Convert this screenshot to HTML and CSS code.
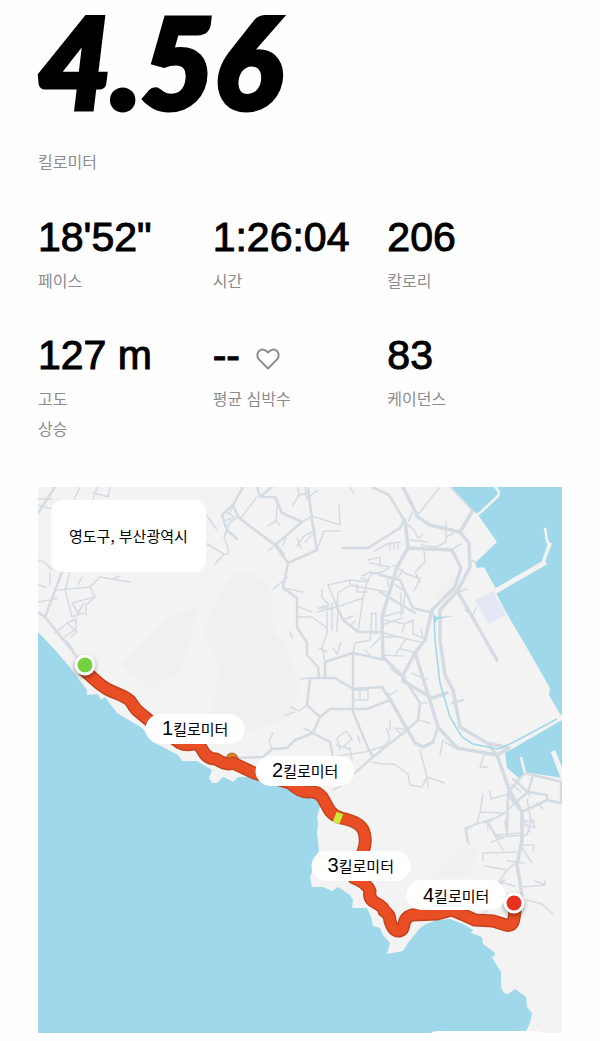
FILE: index.html
```
<!DOCTYPE html>
<html lang="ko">
<head>
    <meta charset="UTF-8">
    <meta name="viewport" content="width=device-width, initial-scale=1.0">
    <title>러닝 기록</title>
    <link rel="stylesheet" href="styles.css">
</head>
<body>

    <main class="run">
        <h1 class="distance">4.56</h1>
        <p class="label">킬로미터</p>

        <dl class="stats">
            <div class="stat">
                <dd class="value">18'52"</dd>
                <dt class="label">페이스</dt>
            </div>
            <div class="stat">
                <dd class="value">1:26:04</dd>
                <dt class="label">시간</dt>
            </div>
            <div class="stat">
                <dd class="value">206</dd>
                <dt class="label">칼로리</dt>
            </div>
            <div class="stat">
                <dd class="value">127 m</dd>
                <dt class="label">고도<br>상승</dt>
            </div>
            <div class="stat">
                <dd class="value">--
                    <svg class="heart" viewBox="0 0 24 22" aria-hidden="true">
                        <path d="M12 20.5 3 11.4C.6 8.8.8 5 3.1 3c2.500-2.200 6.200-1.800 8.900 1.500C14.700 1.200 18.400.8 20.900 3c2.300 2 2.500 5.800.1 8.400Z"/>
                    </svg>
                </dd>
                <dt class="label">평균 심박수</dt>
            </div>
            <div class="stat">
                <dd class="value">83</dd>
                <dt class="label">케이던스</dt>
            </div>
        </dl>

        <section class="map">
            <svg class="map-art" viewBox="38 487 524 546" aria-hidden="true">
                <!-- hills -->
                <g class="hill">
                    <path d="M222 588l15-15 15 0 12 10 8 10 2 40 10 10 16 45-8 30-40 12-30 2-12-12 10-50-16-40Z"/>
                    <path d="M198 607l-30 10-25 26-22 22 30 25 30-20 8-25Z"/>
                    <path d="M235 611l12 8-5 25 20 20-3 28-18 8-10-40Z"/>
                    <path d="M460 847l20 0-12 28-42 6Z"/>
                    <path d="M455 573l3 14-14 14-12-5Z"/>
                </g>

                <!-- small streets -->
                <path class="road thin" d="M97 487l-4 13M80 487l-6 13M93 493l16 4M108 497l2-10M38 499l14 0M38 505l14 4M38 560l6 2 8 8M50 573l0 12M38 602l12-2 7-2M58 590l32-3 10-10 30 5M65 590l7 27 11-4M90 587l5 10-23 6M70 572l-5 18M72 603l6 10 6-10M95 597l-9 8 0 10M82 577l-4 8M55 633l12-10 10 9-6 5M67 623l9-4 0 10-14 10M38 585l8 2M100 577l12 2 8-3M66 640l7 10M107 515l0-4"/>
                <path class="road thin" d="M217 530l-10-14M207 544l17 10-9 10M224 554l4 0 0-7-4-10 6-15 8-5M227 530l-2 6M225 521l9-4-9-6M229 514l5-9M257 497l-17 22M278 499l-2 22-8 5M276 521l4 4M298 487l1 8 10-2M299 495l-6 10M305 487l2 12 8-7 3-1M302 522l10-6 28 9-1-20M317 550l7-19 16 0M302 522l-34 29M283 545l3-7M297 546l7-10 8-4M297 538l4 10M312 520l3 12-10 10M350 487l4 7M277 545l7 9M288 577l-15 12M283 588l20 4M297 606l15 6M290 632l2 6M297 617l15 0 15 11"/>
                <path class="road thin" d="M328 585l22-5 17 2M337 607l1-14 12-8 37 7M317 612l20-5 26-9M328 585l9 22M367 582l-4 16-5 34M371 614l5-1 0 20-6 0M372 613l-2 27-15 3-2 10M327 607l0 26-5 14 3 15M332 603l0 27M338 608l-1 24M350 580l0 6M322 597l7 8-8 2M318 608l12 0M322 590l0 8M357 584l0 8 10 0M361 578l8 3M368 560l12-3 0 9M370 563l20 4-8 5-11 2-4 8M362 576l8-4 18 4 0 10M375 551l12-7 13-2M390 543l0 7M394 543l0 6M398 543l0 5M382 617l18-5M382 625l20-7M383 637l18 0M383 655l20 1M380 638l-10 10M343 620l10-4M350 626l5-5M333 648l4 6 4-12M327 652l-8-4M365 650l5 5"/>
                <path class="road thin" d="M407 524l7 6 4 8 6-4M410 540l17 2M440 487l-16 20-8 10M412 512l-3 9M446 522l0 20-10 5-15-2M446 537l8-4M451 550l10-6M424 550l1 12-10 10 5 10M393 565l12 8 15 6-6 12M403 570l-5 7M395 585l10 6-2 22M401 593l0 22M385 620l20 4 8-4M405 624l-3 8M413 620l0 14 10 4-2-10M383 633l40 10M405 640l-9 14M415 653l-14-4M388 662l8 10 10 5M397 690l-7 5-7-5M390 668l10 8M412 673l12 6 4 0M470 560l6 2M458 592l9-3M465 610l8 5 3-7"/>
                <path class="road thin" d="M355 690l13 0 0 10-13 0M360 690l0 8M310 678l-9 1M307 705l-8 6-8-4M272 749l-3-8 4-8M313 733l-9-5M285 715l10-3M333 757l12-2 20-3 20-6M340 750l-3-12 8-6M343 747l9-8-6-8M336 745l14 4M352 760l-2-12M360 742l-2-6M380 751l10-12-3-10M372 762l10 2 12 0 14 10 2 11 12 2 5-10-7-27M340 775l10 4M390 720l0 10M395 728l5 5M427 777l17 6M427 777l1 10M406 730l-8-2M418 720l12 3M422 703l5 0M443 740l-3 15M455 748l-10-6M480 767l4-12M480 767l7 0M333 790l8-4"/>
                <path class="road thin" d="M480 812l25 1 10-10M480 812l-3 11-11 7 3 14M480 812l3-18M490 791l1 8 17-5M488 822l9 15 30-2 4-14-4-22M488 822l0 8M488 822l17-9M465 828l18-6 15-5M465 828l2 14M483 822l5 1 15 27M497 835l23-2M505 820l2 15M491 842l12-4M483 861l0-8 34-1M485 866l22 4 10-8M507 870l-8 12M522 887l23-2-10-4M545 885l0-5M527 900l15 4 11 10M520 845l14 0-1 6M520 845l12 18M507 861l17 2M525 825l10 3-3-8M500 882l15 4M524 820l6 12M505 880l-14 8M490 907l-8 8M516 780l14 16M511 784l10 8M526 821l8 0M537 803l6 6"/>

                <!-- main streets -->
                <path class="road mid" d="M55 487l-17 26M62 572l-17 45-7-5M45 617l32 40M260 497l12-10M233 505l-11 10 5 15 10 9M260 497l15 0 7 16 20 9-27 23M257 487l3 10M308 487l4 33 5 30-29 13-13-18-37-28-5-12 10-18"/>
                <path class="road mid" d="M288 563l-5 25 14 10 0 29 10 16 0 12 11 12 1 11M343 548l25 0 32-20 4-8-15-25-17-8M337 607l6 13 15 12 24 0M380 575l20 5 13 28 20 5M380 592l30 18 5 3M325 677l0-15 28-9 32 7M310 678l25 0 18 11 29-2 8 13 17 30M310 678l-3 27 13 12-7 16-18 7-8 8-15 1-9 8-26 1M320 717l10-8 37 0 23-9M353 653l0 59 15 36 5 9M313 733l17 9 3 15M347 780l26-23 34-27 11-10 2-17-17-26M415 743l8 4 10-5 5-15"/>
                <path class="road main" d="M403 487l15 30 12 8 30 7 9 11 1 24-12 23-18 20 0 30 5 35 8 15 7 37 27 16 10 12 13 37 12 20 0 28-5 25 5 30M452 487l21 23-13 22M405 520l3 28 44 2 9 18-6 19-23 23-7 30-10 13-12 22 0 6 29 17 15-5M408 548l-11 19-15 50 1 40 20 20M415 653l7 22 16 52 19 21 40 7M433 742l-10 5-8-4-25-44M458 592l39 68M487 743l22 5-12 7"/>
                <path class="road mid" d="M508 792l-1 41M515 803l13-11 5-17M508 792l17-19 37 9M528 792l19 3 0 5-25 12M547 800l14 3 0-20M513 779l15 13M452 703l11-3M508 795l14 17 0 25"/>

                <!-- sea -->
                <path class="water" d="M38 632L55 650 68 665 77 677 87 690 87 695 98 694 101 700 105 697 117 713 142 728 153 742 178 755 182 761 197 761 212 770 209 778 212 783 217 783 223 777 230 780 233 782 238 777 253 777 277 783 298 793 315 798 320 807 317 817 318 823 317 833 319 850 312 865 312 872 310 877 312 887 323 887 332 891 338 887 350 895 353 900 352 908 367 908 371 917 373 926 380 928 383 935 390 943 387 954 403 951 408 943 420 928 426 924 437 920 450 919 463 924 473 930 471 933 482 937 483 944 495 953 494 957 491 956 501 972 501 987 504 993 508 994 515 989 526 997 527 1007 532 1013 530 1023 525 1033 38 1033Z"/>
                <path class="water" d="M452 487l10 11 11 12 5 5 19 27-22 21 2 5 7-1 11 20 2 8 9 17 21 36 23 40-1 7 11 19 2 1 0-228Z"/>
                <path class="water" d="M505 753l57-33 0 58-37-6-6 6-12-10Z"/>
                <path class="canal" d="M434 615l0 0 1 25 5 43 10 34 12 20 11 7 25 5 14-6 45-24"/>
                <path class="water" d="M434 615l3 2 17-1-16 3-3 4Z"/>
                <path class="dock" d="M475 600l18-9 13 24-18 9Z"/>

                <!-- piers -->
                <path class="pier" d="M474 517l7-5 17-16 1-4-5-7M545 528l2 13 2 3-6 18M551 543l-8 20"/>
                <path class="pier wide" d="M494 592l52-30M553 751l10 26"/>
                <path class="pier" d="M521 757l4 16"/>

                <!-- run -->
                <circle class="pause" cx="232" cy="759" r="6"/>
                <path class="track-edge" d="M85 671C92 677 98 684 107 689S127 696 131 702 135 709 139 712L156 726 180 743Q186 746 193 744 199 743 203 751T216 759Q227 766 233 763L254 773 290 783Q301 793 309 792T322 797L330 811Q334 816 341 818 361 822 364 832T363 852L354 878Q367 883 370 891 368 899 376 903T384 911Q390 914 390 921 393 931 398 931T404 924 412 915L437 914 452 910Q464 915 475 920L493 921 506 925Q513 927 514 918L516 905"/>
                <path class="track" d="M85 671C92 677 98 684 107 689S127 696 131 702 135 709 139 712L156 726 180 743Q186 746 193 744 199 743 203 751T216 759Q227 766 233 763L254 773 290 783Q301 793 309 792T322 797L330 811Q334 816 341 818 361 822 364 832T363 852L354 878Q367 883 370 891 368 899 376 903T384 911Q390 914 390 921 393 931 398 931T404 924 412 915L437 914 452 910Q464 915 475 920L493 921 506 925Q513 927 514 918L516 905"/>
                <path class="fast" d="M340 813l-4 10"/>
                <g class="marker">
                    <circle class="ring" cx="85" cy="665" r="10.500"/>
                    <circle class="start" cx="85" cy="665" r="7.500"/>
                    <circle class="ring" cx="514" cy="903" r="10.500"/>
                    <circle class="finish" cx="514" cy="903" r="7.500"/>
                </g>
                <path class="sheet" d="M430 1034q2-3 8-3l98 0q6 0 9 3Z"/>
            </svg>

            <p class="place">영도구, 부산광역시</p>
            <span class="km km-1"><b>1</b>킬로미터</span>
            <span class="km km-2"><b>2</b>킬로미터</span>
            <span class="km km-3"><b>3</b>킬로미터</span>
            <span class="km km-4"><b>4</b>킬로미터</span>
        </section>
    </main>

</body>
</html>
```

FILE: styles.css
```
* {
    box-sizing: border-box;
}

body {
    margin: 0;
    background-color: #fefefe;
    color: #000;
    font-family: "Liberation Sans", "Noto Sans CJK KR", sans-serif;
}

h1, p, dl, dd {
    margin: 0;
}

.run {
    padding: 0 38px 8px;
}

.distance {
    font-family: Lato, sans-serif;
    font-size: 126px;
    font-weight: 900;
    font-style: italic;
    line-height: 122px;
    margin-bottom: 24px;
    -webkit-text-stroke: 5px #000;
}

.label {
    color: #8c8c8c;
    font-family: "Noto Sans CJK KR", sans-serif;
    font-size: 16px;
    font-weight: 400;
    line-height: 30px;
}

/* Stats */
.stats {
    display: grid;
    grid-template-columns: repeat(3, 1fr);
    row-gap: 36px;
    margin: 37px 0 44px;
}

.stat {
    display: flex;
    flex-direction: column;
    gap: 4px;
}

.value {
    display: flex;
    align-items: center;
    gap: 16px;
    font-size: 41px;
    line-height: 48px;
    white-space: nowrap;
    -webkit-text-stroke: 1px #000;
}

.heart {
    width: 24px;
    height: 22px;
    margin-top: 8px;
    fill: none;
    stroke: #8c8c8c;
    stroke-width: 2;
    stroke-linejoin: round;
}

/* Map */
.map {
    position: relative;
    background-color: #f3f3f3;
}

.map-art {
    display: block;
    width: 100%;
}

.hill path {
    fill: #f0f0f0;
}

.road {
    fill: none;
    stroke: #d4dbe2;
    stroke-linejoin: round;
    stroke-linecap: round;
}

.thin {
    stroke-width: 1.5;
}

.mid {
    stroke-width: 2.5;
}

.main {
    stroke-width: 3.5;
}

.water {
    fill: #9fd8ea;
}

.canal {
    fill: none;
    stroke: #9fd8ea;
    stroke-width: 1.5;
}

.dock {
    fill: #e3e8f4;
}

.pier {
    fill: none;
    stroke: #f3f3f3;
    stroke-width: 2.5;
}

.wide {
    stroke-width: 5;
}

.track,
.track-edge {
    fill: none;
    stroke: #ea4e24;
    stroke-width: 10;
    stroke-linejoin: round;
    stroke-linecap: round;
}

.track-edge {
    stroke: #c2431f;
    stroke-width: 13;
}

.fast {
    stroke: #c8e83c;
    stroke-width: 7;
}

.pause {
    fill: #d9822b;
    stroke: #b8642a;
}

.marker {
    filter: drop-shadow(0 2px 2px rgba(0, 0, 0, 0.4));
}

.ring,
.sheet {
    fill: #fff;
}

.start {
    fill: #76d13f;
}

.finish {
    fill: #e8301f;
}

.place {
    position: absolute;
    top: 13px;
    left: 13px;
    padding: 21px 18px;
    background-color: #fff;
    border-radius: 12px;
    font-family: "Noto Sans CJK KR", sans-serif;
    font-size: 15px;
    line-height: 30px;
    white-space: nowrap;
}

/* Kilometre pins, anchored at their centre */
.km {
    position: absolute;
    display: flex;
    align-items: center;
    justify-content: center;
    width: 99px;
    height: 30px;
    border-radius: 15px;
    background-color: #fff;
    font-size: 15px;
    white-space: nowrap;
    transform: translate(-50%, -50%);
}

.km b {
    font-size: 20px;
    font-weight: 400;
}

.km-1 {
    left: 30%;
    top: 44.300%;
}

.km-2 {
    left: 51%;
    top: 52%;
}

.km-3 {
    left: 61.600%;
    top: 69.400%;
}

.km-4 {
    left: 79.800%;
    top: 74.800%;
}
```
